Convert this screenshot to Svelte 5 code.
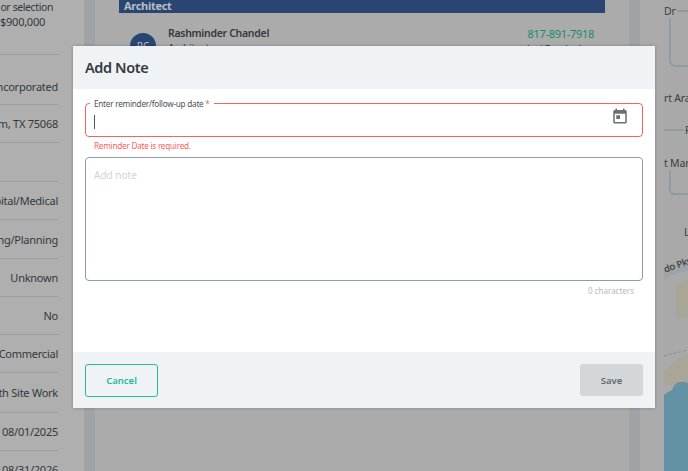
<script>
  const rows = [
    { t: 'ncorporated', h: 50, tall: true },
    { t: 'm, TX 75068', h: 38 },
    { t: '', h: 39 },
    { t: 'pital/Medical', h: 38 },
    { t: 'ng/Planning', h: 39 },
    { t: 'Unknown', h: 38 },
    { t: 'No', h: 38 },
    { t: 'Commercial', h: 38 },
    { t: 'th Site Work', h: 40 },
    { t: '08/01/2025', h: 38 },
    { t: '08/31/2026', h: 38 }
  ];
</script>

<div class="page">
  <aside class="left">
    <div class="intro">
      <div class="l1">or selection</div>
      <div class="l2">$900,000</div>
    </div>
    {#each rows as r}
      <div class="row" class:tall={r.tall} style="height:{r.h}px"><span>{r.t}</span></div>
    {/each}
  </aside>
  <div class="gutter"></div>
  <main class="center">
    <div class="band">Architect</div>
    <div class="contact">
      <div class="avatar">RC</div>
      <div class="who">
        <div class="name">Rashminder Chandel</div>
        <div class="role">Architect</div>
      </div>
      <div class="reach">
        <div class="phone">817-891-7918</div>
        <div class="mail">lori@rcdesign</div>
      </div>
    </div>
  </main>
  <div class="gutter"></div>
  <aside class="map">
    <div class="canvas">
      <svg width="24" height="471" viewBox="0 0 24 471" aria-hidden="true">
        <path d="M6 11 H24 M6 15 V60 Q6 66 12 66 H24" fill="none" stroke="#8e9ba0" stroke-width="2"/>
        <path d="M0 130 H20" fill="none" stroke="#8e9ba0" stroke-width="2"/>
        <path d="M6 168 V189 Q6 194 11 194 H24" fill="none" stroke="#8e9ba0" stroke-width="2"/>
        <path d="M0 268 Q10 261 24 260 V271 Q10 272 0 280 Z" fill="#9ea3a8"/>
        <path d="M12 284 L24 280 V318 H12 Z" fill="#aaa697"/>
        <path d="M0 356 L24 350" fill="none" stroke="#6f9a9a" stroke-dasharray="3 2"/>
        <path d="M0 372 L12 360 L24 352 V385 H0 Z" fill="#aaa697"/>
        <path d="M0 395 Q4 392 8 390 Q11 382 16 382 Q20 381 24 383 V471 H0 Z" fill="#6292a3"/>
      </svg>
      <span class="m1">Dr</span>
      <span class="m2">rt Ara</span>
      <span class="m3">P</span>
      <span class="m4">t Man</span>
      <span class="m5">L</span>
      <span class="m6">do Pkwy</span>
    </div>
  </aside>

  <div class="dialog" role="dialog" aria-label="Add Note">
    <header class="head"><h2>Add Note</h2></header>
    <div class="body">
      <div class="field">
        <span class="legend">Enter reminder/follow-up date <b>*</b></span>
        <span class="caret"></span>
        <svg class="cal" width="18" height="18" viewBox="0 0 24 24" aria-hidden="true">
          <path fill="#6b6f72" d="M19 4h-1V2h-2v2H8V2H6v2H5a2 2 0 0 0-2 2v14a2 2 0 0 0 2 2h14a2 2 0 0 0 2-2V6a2 2 0 0 0-2-2zm0 16H5V9h14v11zM7 11h5v5H7z"/>
        </svg>
      </div>
      <div class="error">Reminder Date is required.</div>
      <div class="note">Add note</div>
      <div class="count">0 characters</div>
    </div>
    <footer class="foot">
      <button class="cancel">Cancel</button>
      <button class="save">Save</button>
    </footer>
  </div>
</div>

<style>
  :global(body) { margin: 0; }
  .page {
    position: relative;
    display: flex;
    width: 688px;
    height: 471px;
    overflow: hidden;
    background: #ababab;
    font-family: "Noto Sans", "Open Sans", sans-serif;
    color: #34383d;
  }
  .left {
    width: 84px;
    flex: none;
    padding-right: 26px;
    box-sizing: border-box;
    font-size: 11px;
    letter-spacing: -.25px;
    background: #afafaf;
    overflow: hidden;
  }
  .intro {
    height: 55px;
    box-sizing: border-box;
    text-align: right;
    white-space: nowrap;
    line-height: 15px;
    border-bottom: 1px solid #9e9e9e;
  }
  .l1 { margin-right: 5px; font-size: 10.5px; letter-spacing: -.4px; }
  .l2 { margin-right: 13px; margin-top: -1px; }
  .row {
    box-sizing: border-box;
    border-bottom: 1px solid #9e9e9e;
    display: flex;
    align-items: center;
    justify-content: flex-end;
    white-space: nowrap;
  }
  .row.tall { align-items: flex-end; padding-bottom: 10px; }
  .gutter { width: 11px; flex: none; background: #9fa3a5; }
  .center { width: 534px; flex: none; padding: 0 24px; box-sizing: border-box; }
  .band {
    height: 13px;
    background: #294672;
    color: #b9bec6;
    font-size: 11px;
    letter-spacing: -.3px;
    font-weight: 700;
    line-height: 11px;
    padding-left: 5px;
  }
  .contact { display: flex; align-items: flex-start; padding-top: 13px; }
  .avatar {
    width: 26px; height: 26px; border-radius: 50%;
    background: #294672; color: #b9bec6; font-size: 10px;
    display: flex; align-items: center; justify-content: center;
    margin: 7px 12px 0 11px; flex: none;
  }
  .who { flex: 1; font-size: 10.5px; line-height: 15px; letter-spacing: -.3px; }
  .name { font-weight: 600; }
  .reach { text-align: right; font-size: 11px; line-height: 15px; padding-right: 11px; letter-spacing: -.3px; }
  .phone { color: #178a6e; }
  .map { flex: 1; padding-left: 24px; display: flex; }
  .canvas { flex: 1; position: relative; overflow: hidden; font-size: 10.5px; letter-spacing: -.2px; color: #3a3f42; background: #a9a9a9; }
  .canvas svg { position: absolute; left: 0; top: 0; }
  .canvas span { position: absolute; white-space: nowrap; }
  .m1 { left: 0; top: 4px; background: #a9a9a9; padding-right: 1px; }
  .m2 { left: 0; top: 91px; }
  .m3 { left: 21px; top: 123px; }
  .m4 { left: 0; top: 156px; background: #a9a9a9; }
  .m5 { left: 20px; top: 225px; }
  .m6 { left: 0; top: 263px; transform: rotate(-20deg); transform-origin: left center; font-size: 9.5px; font-weight: 500; }

  .dialog {
    position: absolute;
    left: 73px;
    top: 46px;
    width: 582px;
    height: 362px;
    background: #fff;
    display: flex;
    flex-direction: column;
    box-shadow: 0 0 3px rgba(0,0,0,.25);
  }
  .head {
    height: 43px;
    flex: none;
    box-sizing: border-box;
    padding: 0 0 2px 12px;
    background: #eff3f6;
    display: flex;
    align-items: center;
  }
  .head h2 { margin: 0; font-size: 14.5px; letter-spacing: -.4px; font-weight: 600; color: #343a40; }
  .body { flex: 1; padding: 14px 12px 0; min-height: 0; }
  .field {
    position: relative;
    height: 32px;
    border: 1px solid #f4655d;
    border-radius: 4px;
  }
  .legend {
    position: absolute;
    left: 4px;
    top: -5px;
    padding: 0 4px;
    background: #fff;
    font-size: 8.2px;
    letter-spacing: -.25px;
    line-height: 10px;
    color: #4d5257;
    white-space: nowrap;
  }
  .legend b { color: #f4655d; font-weight: 400; }
  .caret { position: absolute; left: 8px; top: 11px; width: 1px; height: 14px; background: #555; }
  .cal { position: absolute; right: 13px; top: 3px; }
  .error { font-size: 8.2px; letter-spacing: -.25px; line-height: 12px; color: #f4655d; padding: 3px 0 0 9px; height: 17px; box-sizing: border-box; }
  .note {
    border: 1px solid #8c9cad;
    border-radius: 4px;
    padding: 10px 8px;
    box-sizing: border-box;
    height: 124px;
    margin-top: 3px;
    font-size: 10px;
    line-height: 14px;
    color: #ced3d9;
  }
  .count { text-align: right; font-size: 8px; color: #b4bbc2; padding: 5px 9px 0 0; line-height: 10px; }
  .foot {
    height: 56px;
    flex: none;
    box-sizing: border-box;
    background: #eff3f6;
    display: flex;
    justify-content: space-between;
    align-items: center;
    padding: 0 12px;
  }
  button { font-family: inherit; font-size: 9.5px; font-weight: 600; border-radius: 3px; cursor: pointer; }
  .cancel { width: 73px; height: 33px; background: transparent; border: 1px solid #28b99b; color: #28b99b; }
  .save { width: 63px; height: 32px; background: #d3d7da; border: 0; color: #62676b; }
</style>
